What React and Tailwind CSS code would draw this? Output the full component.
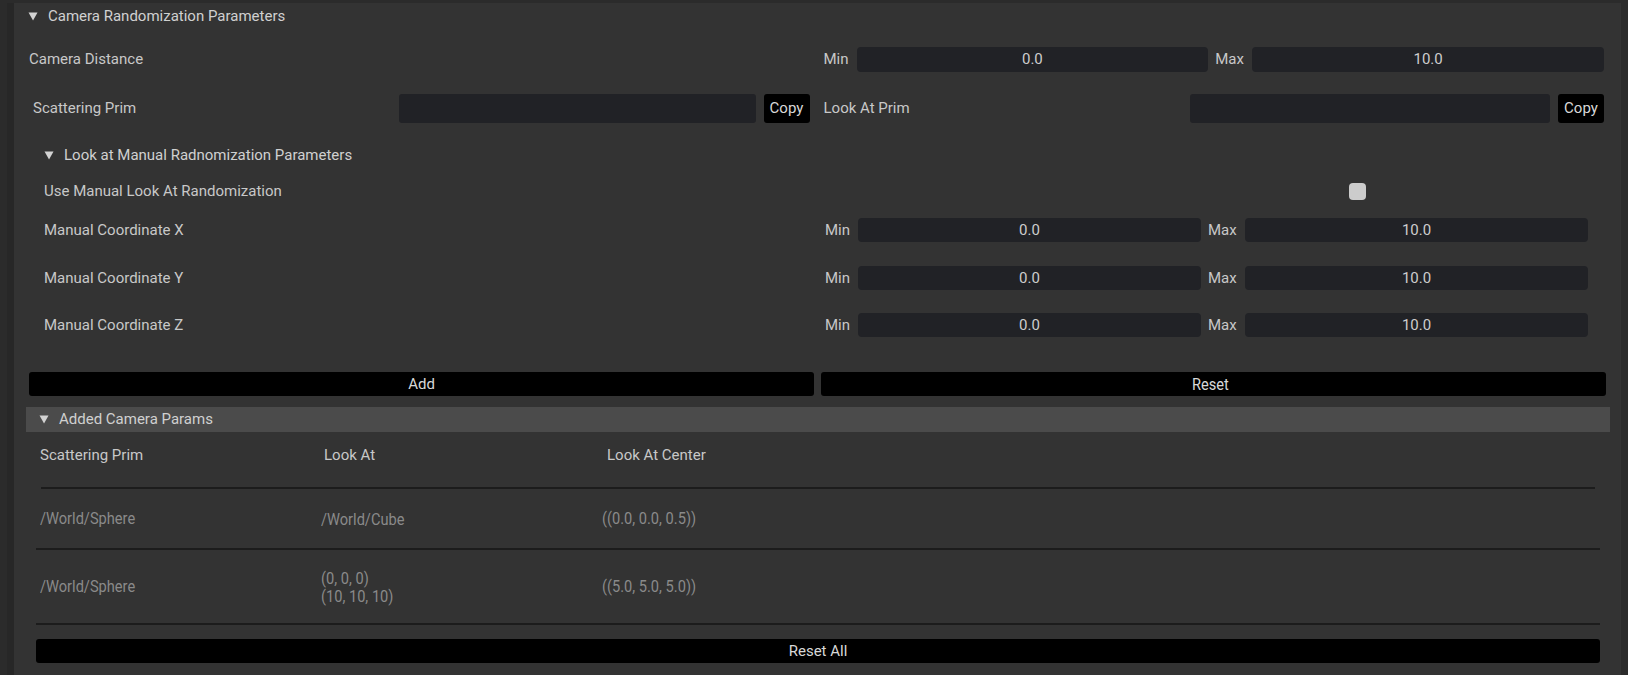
import React from 'react';

const font = { fontFamily: 'Roboto, "Noto Sans", sans-serif' };

function Tri({ className = '' }) {
  return (
    <svg width="10" height="9" viewBox="0 0 10 9" className={className}>
      <path d="M0.5 0.5 H9.5 L5 8.5 Z" fill="#d2d2d2" />
    </svg>
  );
}

function Field({ value, h = 'h-[25px]' }) {
  return (
    <div className={`flex-1 ${h} bg-[#212226] rounded-[4px] flex items-center justify-center text-[15px] text-[#cdcdcd]`}>
      {value}
    </div>
  );
}

function MinMax({ min = '0.0', max = '10.0', h }) {
  return (
    <div className="flex items-center">
      <span className="w-[33px] text-[15px] text-[#c8c8c8]">Min</span>
      <Field value={min} h={h} />
      <span className="ml-[7px] w-[37px] text-[15px] text-[#c8c8c8]">Max</span>
      <Field value={max} h={h} />
    </div>
  );
}

function PrimPicker({ label, labelW }) {
  return (
    <div className="flex items-center">
      <span className={`${labelW} text-[15px] text-[#c8c8c8]`}>{label}</span>
      <div className="flex-1 h-[29px] bg-[#212226] rounded-[3px]" />
      <button className="ml-[8px] w-[46px] h-[29px] bg-black rounded-[3px] text-[15px] text-[#d8d8d8]">Copy</button>
    </div>
  );
}

function Narrow({ children }) {
  return <span className="inline-block origin-left scale-x-[0.86] text-[17px] whitespace-nowrap">{children}</span>;
}

const rows = [
  { prim: '/World/Sphere', look: ['/World/Cube'], center: '((0.0, 0.0, 0.5))', h: 'h-[59px]' },
  { prim: '/World/Sphere', look: ['(0, 0, 0)', '(10, 10, 10)'], center: '((5.0, 5.0, 5.0))', h: 'h-[73px]' },
];

export default function App() {
  return (
    <div className="h-[675px] w-full overflow-hidden bg-[#2b2b2b] pt-[3px] pl-[7px] pr-[7px]" style={font}>
      <div className="border-l-[7px] border-[#272727] h-full">
        <div className="bg-[#333333] h-full">
          {/* header */}
          <div className="h-[26px] flex items-center pl-[14px]">
            <Tri />
            <span className="ml-[10px] text-[15px] text-[#d0d0d0]">Camera Randomization Parameters</span>
          </div>

          <div className="pl-[15px] w-[1590px]">
            <div className="grid grid-cols-2 gap-[14px] mt-[18px] items-center">
              <span className="text-[15px] text-[#c8c8c8]">Camera Distance</span>
              <MinMax />
            </div>

            <div className="grid grid-cols-2 gap-[14px] mt-[22px]">
              <div className="pl-[4px]">
                <PrimPicker label="Scattering Prim" labelW="w-[366px]" />
              </div>
              <PrimPicker label="Look At Prim" labelW="w-[366px]" />
            </div>

            {/* manual look-at sub section */}
            <div className="pl-[15px] pr-[16px]">
              <div className="h-[22px] mt-[21px] flex items-center">
                <Tri />
                <span className="ml-[10px] text-[15px] text-[#d0d0d0]">Look at Manual Radnomization Parameters</span>
              </div>
              <div className="grid grid-cols-2 gap-[18px] h-[24px] mt-[13px] items-center">
                <span className="text-[15px] text-[#c8c8c8]">Use Manual Look At Randomization</span>
                <div className="pl-[524px] flex items-center">
                  <div className="w-[17px] h-[17px] rounded-[4px] bg-[#cccccc]" />
                </div>
              </div>
              {['X', 'Y', 'Z'].map((c, i) => (
                <div
                  key={c}
                  className={`grid grid-cols-2 gap-[18px] items-center ${i === 0 ? 'mt-[15px]' : i === 1 ? 'mt-[24px]' : 'mt-[23px]'}`}
                >
                  <span className="text-[15px] text-[#c8c8c8]">Manual Coordinate {c}</span>
                  <MinMax h="h-[24px]" />
                </div>
              ))}
            </div>

            <div className="grid grid-cols-2 gap-[7px] mt-[35px] w-[1577px]">
              <button className="h-[24px] bg-black rounded-[3px] text-[15px] text-[#d8d8d8]">Add</button>
              <button className="h-[24px] bg-black rounded-[3px] text-[#d8d8d8]">
                <Narrow>Reset</Narrow>
              </button>
            </div>
          </div>

          {/* added camera params */}
          <div className="pl-[12px] mt-[11px]">
            <div className="w-[1584px] h-[25px] bg-[#4b4b4b] flex items-center pl-[13px]">
              <Tri />
              <span className="ml-[10px] text-[15px] text-[#d0d0d0]">Added Camera Params</span>
            </div>

            <div className="pl-[10px] w-[1574px]">
              <div className="flex items-center h-[46px] pl-[4px] text-[15px] text-[#c8c8c8]">
                <span className="w-[284px]">Scattering Prim</span>
                <span className="w-[283px]">Look At</span>
                <span>Look At Center</span>
              </div>
              <div className="mt-[9px] ml-[5px] mr-[5px] h-[2px] bg-[#1c1c1c]" />

              {rows.map((r, i) => (
                <div key={i}>
                  <div className={`flex items-center ${r.h} pl-[4px] text-[#8a8a8a]`}>
                    <div className="w-[281px]"><Narrow>{r.prim}</Narrow></div>
                    <div className="w-[281px] flex flex-col leading-[18px]">
                      {r.look.map((l) => (
                        <Narrow key={l}>{l}</Narrow>
                      ))}
                    </div>
                    <div><Narrow>{r.center}</Narrow></div>
                  </div>
                  <div className="h-[2px] bg-[#1c1c1c]" />
                </div>
              ))}

              <button className="mt-[14px] w-full h-[24px] bg-black rounded-[3px] text-[15px] text-[#d8d8d8]">Reset All</button>
            </div>
          </div>
        </div>
      </div>
    </div>
  );
}
